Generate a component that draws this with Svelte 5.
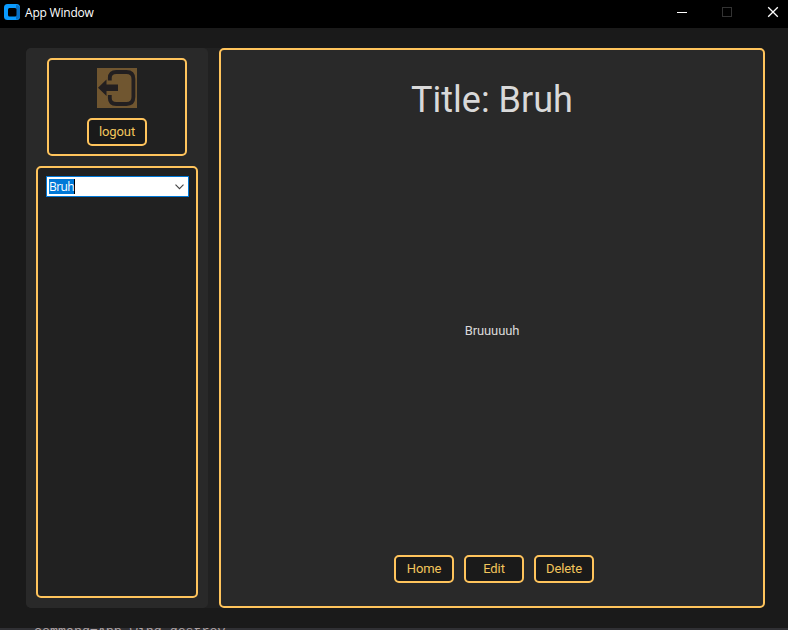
<script>
  let selected = $state('Bruh');
  const actions = ['Home', 'Edit', 'Delete'];
</script>

<div class="window">
  <header>
    <svg class="logo" width="16" height="16" viewBox="0 0 16 16">
      <rect width="16" height="16" rx="3.500" fill="#0a9bff" />
      <path d="M12 1q4 0 4 3.500v7q0 3.500-4 4z" fill="#0871c6" />
      <rect x="4" y="4" width="8.500" height="8.500" rx="1.500" fill="#000" />
    </svg>
    <span class="caption">App Window</span>
    <div class="controls">
      <svg width="46" height="28" viewBox="0 0 46 28"><path d="M17 12.500h10" stroke="#fff" /></svg>
      <svg width="46" height="28" viewBox="0 0 46 28"><rect x="16.500" y="7.500" width="9" height="9" fill="none" stroke="#333" /></svg>
      <svg width="30" height="28" viewBox="0 0 30 28"><path d="M16.200 7.200l9.600 9.600M25.800 7.200l-9.600 9.600" stroke="#fff" stroke-width="1.300" /></svg>
    </div>
  </header>

  <main>
    <aside>
      <section class="account">
        <svg class="exit" width="40" height="40" viewBox="0 0 40 40">
          <rect width="40" height="40" fill="#705630" />
          <path d="M12.800 12.500V10q0-6 6.400-6h10.200q7 0 7 7v18q0 7-7 7H19.200q-6.400 0-6.400-6v-3" fill="none" stroke="#231f20" stroke-width="3.800" />
          <path d="M1 19.700L9.500 11.500v5H21v6.500H9.500v5z" fill="#231f20" />
        </svg>
        <button>logout</button>
      </section>
      <section class="list">
        <div class="combo">
          <span class="value">{selected}</span>
          <svg width="9" height="6" viewBox="0 0 9 6"><path d="M.5.7l4 4 4-4" fill="none" stroke="#444" stroke-width="1.100" /></svg>
        </div>
      </section>
    </aside>

    <article>
      <h1>Title: {selected}</h1>
      <p>Bruuuuuh</p>
      <nav>
        {#each actions as action}
          <button>{action}</button>
        {/each}
      </nav>
    </article>
  </main>
  <footer><span>command=App_wind.destroy</span></footer>
</div>

<style>
  .window {
    width: 788px;
    height: 630px;
    display: flex;
    flex-direction: column;
    background: #1a1a1a;
    color: #dce4ee;
    font-family: Roboto, sans-serif;
    font-size: 13px;
    overflow: hidden;
  }
  header {
    height: 28px;
    flex: none;
    display: flex;
    background: #000;
  }
  .logo { margin: 4px 5px 0 4px; }
  .caption {
    font: 12px/26px "Open Sans", "Noto Sans", sans-serif;
    color: #fff;
    letter-spacing: -0.2px;
  }
  .controls { margin-left: auto; display: flex; margin-right: 10px; width: 118px; }
  .controls svg { flex: none; }
  main {
    display: flex;
    gap: 11px;
    width: 739px;
    height: 560px;
    margin: 20px 0 20px 26px;
    flex: none;
    background: #212121;
    border-radius: 5px;
  }
  aside {
    box-sizing: border-box;
    width: 182px;
    padding: 10px;
    display: flex;
    flex-direction: column;
    align-items: center;
    gap: 10px;
    background: #292929;
    border-radius: 5px;
  }
  section, article {
    box-sizing: border-box;
    border: 2px solid #ffc45c;
    border-radius: 5px;
  }
  section { background: #212121; }
  .account {
    width: 140px;
    height: 98px;
    padding-top: 8px;
    display: flex;
    flex-direction: column;
    align-items: center;
    gap: 10px;
    flex: none;
  }
  .list {
    width: 162px;
    flex: 1;
    padding: 8px 7px 0 8px;
  }
  .combo {
    box-sizing: border-box;
    height: 21px;
    border: 1px solid #0078d7;
    background: #fff;
    display: flex;
    align-items: center;
    justify-content: space-between;
    padding: 0 4px 0 2px;
  }
  .value {
    height: 15px;
    line-height: 15px;
    font-size: 12px;
    font-family: "Open Sans", "Noto Sans", sans-serif;
    letter-spacing: -0.6px;
    color: #fff;
    background: #0078d7;
    border-right: 1px solid #000;
  }
  article {
    width: 546px;
    background: #292929;
    display: flex;
    flex-direction: column;
    align-items: center;
  }
  h1 {
    margin: 29px 0 0;
    font-size: 36px;
    font-weight: 400;
    line-height: 42px;
    color: #d9d9d9;
  }
  p {
    margin: 202px 0 0;
    line-height: 16px;
    letter-spacing: -0.1px;
    color: #d9d9d9;
  }
  nav {
    display: flex;
    gap: 10px;
    margin: auto 0 23px 4px;
  }
  button {
    box-sizing: border-box;
    width: 60px;
    height: 28px;
    padding: 0 0 1px;
    border: 2px solid #ffc45c;
    border-radius: 5px;
    background: #1a1a1a;
    color: #f3c55c;
    font: 13px Roboto, sans-serif;
    letter-spacing: -0.1px;
  }
  footer {
    height: 2px;
    overflow: hidden;
    background: #303034;
    color: #b0a5a7;
    font: 13.300px/16px "Liberation Mono", monospace;
    padding-left: 34px;
    flex: none;
  }
  footer span { display: block; margin-top: -4px; }
</style>
